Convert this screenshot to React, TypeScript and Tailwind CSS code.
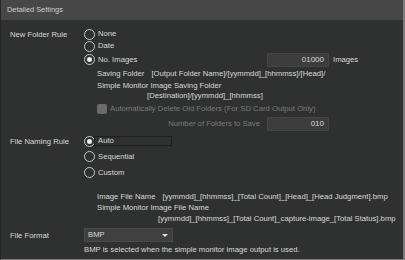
const Radio = ({ checked, label }: { checked?: boolean; label: string }) => (
  <div className="flex items-center gap-[3px]">
    <div className="w-[11px] h-[11px] rounded-full border border-[#c9c9c9] flex items-center justify-center">
      {checked && <div className="w-[5px] h-[5px] rounded-full bg-[#ececec]" />}
    </div>
    <span>{label}</span>
  </div>
);

const NumBox = ({ value }: { value: string }) => (
  <div className="w-[62px] h-[14px] bg-[#3d3d3d] border border-[#454545] flex items-center justify-end pr-[4px] text-[8px]">
    {value}
  </div>
);

export default function App() {
  return (
    <div
      className="w-[405px] h-[260px] bg-[#2f3030] text-[#dadada] text-[7.7px] leading-none flex flex-col border-r-2 border-b border-[#7c7c7c] border-l border-l-[#262626] overflow-hidden"
      style={{ fontFamily: '"Liberation Sans", Arial, sans-serif' }}
    >
      <div className="h-[20px] shrink-0 bg-[#474747] flex items-center px-[6px] text-[#cfcfcf] text-[7.4px]">
        Detailed Settings
      </div>

      <div className="flex flex-col pl-[9px] pt-[8px]">
        {/* New Folder Rule */}
        <div className="flex">
          <div className="w-[74px] pt-[3px]">New Folder Rule</div>
          <div className="flex flex-col">
            <div className="h-[12px] flex items-center">
              <Radio label="None" />
            </div>
            <div className="h-[12px] flex items-center">
              <Radio label="Date" />
            </div>
            <div className="h-[15px] flex items-center">
              <div className="w-[183px]">
                <Radio checked label="No. Images" />
              </div>
              <NumBox value="01000" />
              <span className="ml-[4px]">Images</span>
            </div>
            <div className="pl-[13px] h-[13px] flex items-center">
              <span className="mr-[7px]">Saving Folder</span>
              <span>[Output Folder Name]/[yymmdd]_[hhmmss]/[Head]/</span>
            </div>
            <div className="pl-[13px] h-[11px] flex items-center">Simple Monitor Image Saving Folder</div>
            <div className="pl-[63px] h-[10px] flex items-center">[Destination]/[yymmdd]_[hhmmss]</div>
            <div className="pl-[13px] h-[15px] flex items-center gap-[3px] text-[#7b7b7b]">
              <div className="w-[10px] h-[10px] rounded-[2px] bg-[#6a6a6a]" />
              <span>Automatically Delete Old Folders (For SD Card Output Only)</span>
            </div>
            <div className="h-[15px] flex items-center">
              <div className="w-[183px] flex justify-end pr-[7px] text-[#7b7b7b]">Number of Folders to Save</div>
              <NumBox value="010" />
            </div>
          </div>
        </div>

        {/* File Naming Rule */}
        <div className="flex mt-[4px]">
          <div className="w-[74px] pt-[3px]">File Naming Rule</div>
          <div className="flex flex-col">
            <div className="h-[12px] flex items-center relative">
              <Radio checked label="Auto" />
              <div className="absolute left-[10px] top-[1px] w-[78px] h-[10px] border border-[#1f1f1f]" />
            </div>
            <div className="h-[15px] flex items-center mt-[2px]">
              <Radio label="Sequential" />
            </div>
            <div className="h-[15px] flex items-center mt-[1px]">
              <Radio label="Custom" />
            </div>
            <div className="pl-[13px] h-[13px] flex items-center mt-[10px]">
              <span className="mr-[7px]">Image File Name</span>
              <span>[yymmdd]_[hhmmss]_[Total Count]_[Head]_[Head Judgment].bmp</span>
            </div>
            <div className="pl-[13px] h-[10px] flex items-center">Simple Monitor Image File Name</div>
            <div className="pl-[74px] h-[11px] flex items-center whitespace-nowrap">
              [yymmdd]_[hhmmss]_[Total Count]_capture-image_[Total Status].bmp
            </div>
          </div>
        </div>

        {/* File Format */}
        <div className="flex mt-[4px]">
          <div className="w-[74px] pt-[4px]">File Format</div>
          <div className="flex flex-col">
            <div className="w-[89px] h-[14px] bg-[#404040] border border-[#4a4a4a] flex items-center justify-between pl-[3px] pr-[4px]">
              <span>BMP</span>
              <div className="w-0 h-0 border-l-[3px] border-r-[3px] border-t-[3px] border-l-transparent border-r-transparent border-t-[#e0e0e0]" />
            </div>
            <div className="h-[14px] flex items-center mt-[1px]">BMP is selected when the simple monitor image output is used.</div>
          </div>
        </div>
      </div>
    </div>
  );
}
